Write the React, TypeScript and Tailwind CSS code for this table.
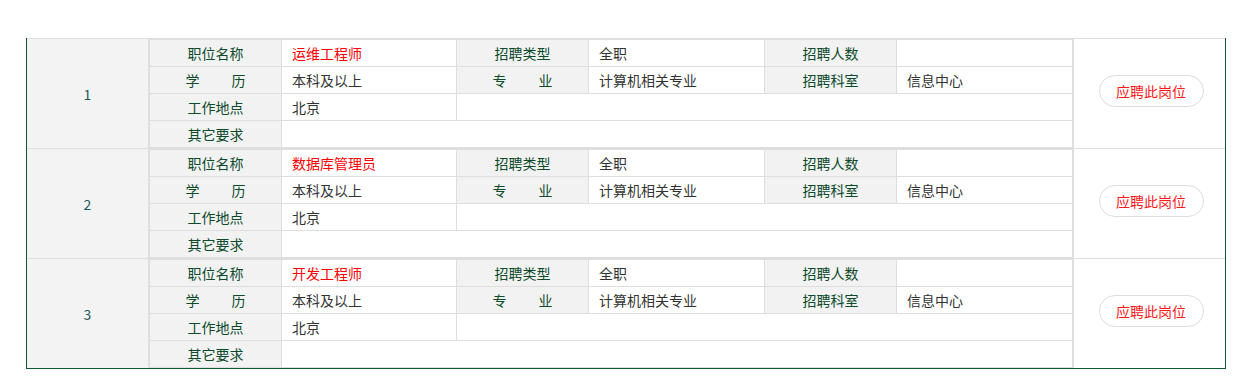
import React from "react";

const jobs = [
  { no: 1, name: "运维工程师" },
  { no: 2, name: "数据库管理员" },
  { no: 3, name: "开发工程师" },
];

function Label({ children, className = "" }: { children: React.ReactNode; className?: string }) {
  return (
    <div className={`flex items-center justify-center bg-[#f2f2f2] text-[#0c4a2c] ${className}`}>
      {children}
    </div>
  );
}

function Value({ children, className = "" }: { children?: React.ReactNode; className?: string }) {
  return <div className={`flex items-center bg-white pl-[10px] text-[#333333] ${className}`}>{children}</div>;
}

function Spread({ a, b }: { a: string; b: string }) {
  return (
    <span className="inline-flex">
      <span>{a}</span>
      <span className="inline-block w-[32px]" />
      <span>{b}</span>
    </span>
  );
}

export default function App() {
  return (
    <div className="min-h-[381px] bg-white font-['Noto_Sans_CJK_SC','Microsoft_YaHei',sans-serif] text-[14px] leading-[26px]">
      <div className="ml-[26px] w-[1200px] pt-[38px]">
        <div className="border-x border-b border-[#0b5a30]">
          {jobs.map((job) => (
            <div key={job.no} className="flex border-t border-[#dedede]">
              <div className="flex w-[122px] items-center justify-center border-r border-[#dedede] bg-[#f3f3f3] text-[14px] text-[#1d5a5e]">
                {job.no}
              </div>
              <div className="grid w-[924px] grid-cols-[131px_174px_131px_175px_131px_175px] grid-rows-[26px_26px_26px_26px] gap-px border border-[#dedede] bg-[#dedede]">
                <Label>职位名称</Label>
                <Value className="text-[#ff0000]">
                  <span className="text-[#ff0000]">{job.name}</span>
                </Value>
                <Label>招聘类型</Label>
                <Value>全职</Value>
                <Label>招聘人数</Label>
                <Value />

                <Label>
                  <Spread a="学" b="历" />
                </Label>
                <Value>本科及以上</Value>
                <Label>
                  <Spread a="专" b="业" />
                </Label>
                <Value>计算机相关专业</Value>
                <Label>招聘科室</Label>
                <Value>信息中心</Value>

                <Label>工作地点</Label>
                <Value>北京</Value>
                <Value className="col-span-4" />

                <Label>其它要求</Label>
                <Value className="col-span-5" />
              </div>
              <div className="flex flex-1 items-center justify-center border-l border-[#dedede] bg-white pb-[6px] pl-[3px]">
                <button
                  type="button"
                  className="flex h-[32px] w-[105px] items-center justify-center rounded-full border border-[#dddddd] bg-white text-[14px] text-[#ff1a1a]"
                >
                  应聘此岗位
                </button>
              </div>
            </div>
          ))}
        </div>
      </div>
    </div>
  );
}
